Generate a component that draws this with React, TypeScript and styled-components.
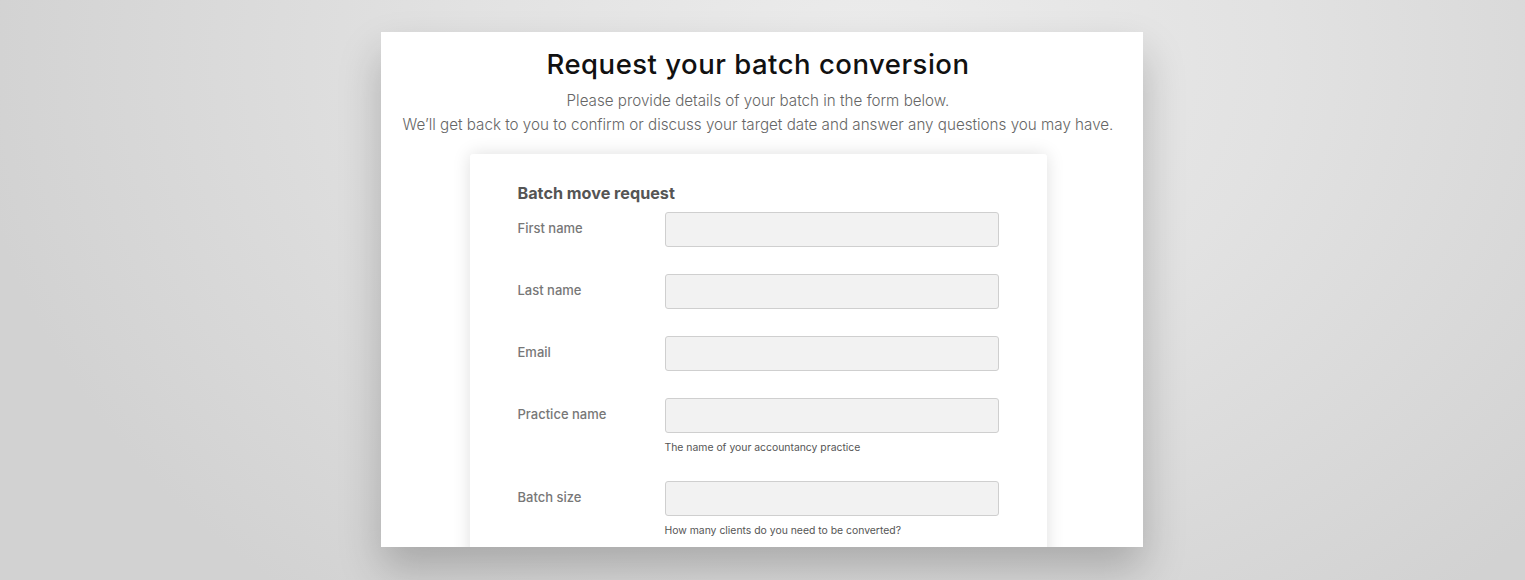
import React from 'react';
import styled, { createGlobalStyle } from 'styled-components';

const GlobalStyle = createGlobalStyle`
  html, body {
    margin: 0;
    padding: 0;
    height: 100%;
  }
  body {
    font-family: Inter, 'Liberation Sans', sans-serif;
  }
`;

const Page = styled.div`
  height: 580px;
  overflow: hidden;
  box-sizing: border-box;
  padding: 32px 0 0 381px;
  display: flex;
  background: radial-gradient(ellipse 900px 700px at 57% 10%, #ececec 0%, #e2e2e2 45%, #d2d2d2 100%);
`;

const Sheet = styled.div`
  width: 762px;
  height: 515px;
  background: #fff;
  overflow: hidden;
  box-shadow: 0 22px 40px rgba(0, 0, 0, 0.22);
  display: flex;
  flex-direction: column;
  align-items: center;
  padding-right: 8px;
  box-sizing: border-box;
`;

const Title = styled.h1`
  margin: 12px 0 0;
  font-size: 27.5px;
  line-height: 40px;
  font-weight: 500;
  color: #111;
  letter-spacing: 0.5px;
`;

const Lead = styled.p`
  margin: 5px 0 0;
  font-size: 15.2px;
  line-height: 24px;
  font-weight: 300;
  color: #666;
  text-align: center;
`;

const FormCard = styled.div`
  margin-top: 17px;
  width: 577px;
  flex: 1;
  box-sizing: border-box;
  padding: 27px 48px 0 48px;
  background: #fff;
  border-radius: 3px;
  box-shadow: 0 0 18px rgba(0, 0, 0, 0.13);
`;

const FormTitle = styled.h2`
  margin: 0 0 7px;
  font-size: 16.2px;
  line-height: 24px;
  font-weight: 700;
  color: #555;
`;

const Row = styled.div`
  display: grid;
  grid-template-columns: 147px 1fr;
  margin-bottom: 27px;
`;

const Label = styled.label`
  font-size: 13px;
  font-weight: 500;
  color: #777;
  line-height: 33px;
`;

const Field = styled.div`
  display: flex;
  flex-direction: column;
`;

const Input = styled.input`
  height: 35px;
  box-sizing: border-box;
  margin: 0;
  border: 1px solid #cfcfcf;
  border-radius: 3px;
  background: #f2f2f2;
  font: inherit;
`;

const Help = styled.span`
  margin-top: 8px;
  font-size: 10.4px;
  line-height: 13px;
  color: #555;
`;

const fields = [
  { label: 'First name' },
  { label: 'Last name' },
  { label: 'Email' },
  { label: 'Practice name', help: 'The name of your accountancy practice' },
  { label: 'Batch size', help: 'How many clients do you need to be converted?' },
];

const App = () => (
  <>
    <GlobalStyle />
    <Page>
      <Sheet>
        <Title>Request your batch conversion</Title>
        <Lead>
          Please provide details of your batch in the form below.
          <br />
          We’ll get back to you to confirm or discuss your target date and answer any questions you may have.
        </Lead>
        <FormCard>
          <FormTitle>Batch move request</FormTitle>
          {fields.map((f) => (
            <Row key={f.label}>
              <Label>{f.label}</Label>
              <Field>
                <Input type="text" />
                {f.help && <Help>{f.help}</Help>}
              </Field>
            </Row>
          ))}
        </FormCard>
      </Sheet>
    </Page>
  </>
);

export default App;
